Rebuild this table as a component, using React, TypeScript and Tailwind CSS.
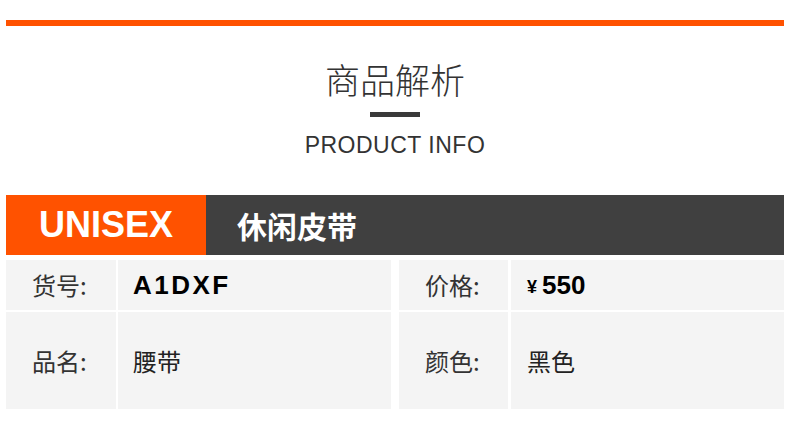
import React from "react";

const cjk = { fontFamily: '"Noto Sans CJK SC", "Noto Sans", sans-serif' };
const latin = { fontFamily: '"Liberation Sans", Arial, "Noto Sans CJK SC", sans-serif' };

function Cell({ className, children, latinFont }: { className: string; children: React.ReactNode; latinFont?: boolean }) {
  return (
    <div className={"bg-[#f4f4f4] flex items-center " + className} style={latinFont ? latin : cjk}>
      {children}
    </div>
  );
}

export default function App() {
  return (
    <div className="w-[790px] h-[429px] bg-white overflow-hidden">
      <div className="pt-[20px] px-[6px]">
        <div className="h-[6px] bg-[#ff5200]" />
      </div>
      <div className="flex flex-col items-center">
        <div className="mt-[31px] text-[35px] leading-[44px] text-[#333] font-light" style={cjk}>
          商品解析
        </div>
        <div className="mt-[11px] w-[50px] h-[5px] bg-[#3a3a3a]" />
        <div className="mt-[15px] text-[23px] leading-[26px] text-[#333] tracking-[0.5px]" style={latin}>
          PRODUCT INFO
        </div>
      </div>
      <div className="mt-[37px] mx-[6px] flex h-[60px]">
        <div className="w-[200px] bg-[#ff5200] flex items-center justify-center text-white font-bold text-[36px]" style={latin}>
          UNISEX
        </div>
        <div className="flex-1 bg-[#404040] flex items-center pl-[31px] text-white font-bold text-[30px]" style={cjk}>
          休闲皮带
        </div>
      </div>
      <div className="mt-[5px] ml-[6px] grid grid-cols-[110px_275px_117px_276px] grid-rows-[50px_97px] gap-y-[2px]">
        <Cell className="pl-[26px] text-[24px] text-[#333]">货号:</Cell>
        <Cell latinFont className="ml-[2px] pl-[15px] text-[26px] font-bold text-black tracking-[2.5px]">A1DXF</Cell>
        <Cell className="ml-[8px] pl-[26px] text-[24px] text-[#333]">价格:</Cell>
        <Cell latinFont className="ml-[3px] pl-[16px] text-black font-bold">
          <span className="text-[18px] mr-[5px] mt-[4px]">¥</span>
          <span className="text-[26px]">550</span>
        </Cell>
        <Cell className="pl-[26px] text-[24px] text-[#333]">品名:</Cell>
        <Cell className="ml-[2px] pl-[15px] text-[24px] text-[#222]">腰带</Cell>
        <Cell className="ml-[8px] pl-[26px] text-[24px] text-[#333]">颜色:</Cell>
        <Cell className="ml-[3px] pl-[16px] text-[24px] text-[#222]">黑色</Cell>
      </div>
    </div>
  );
}
